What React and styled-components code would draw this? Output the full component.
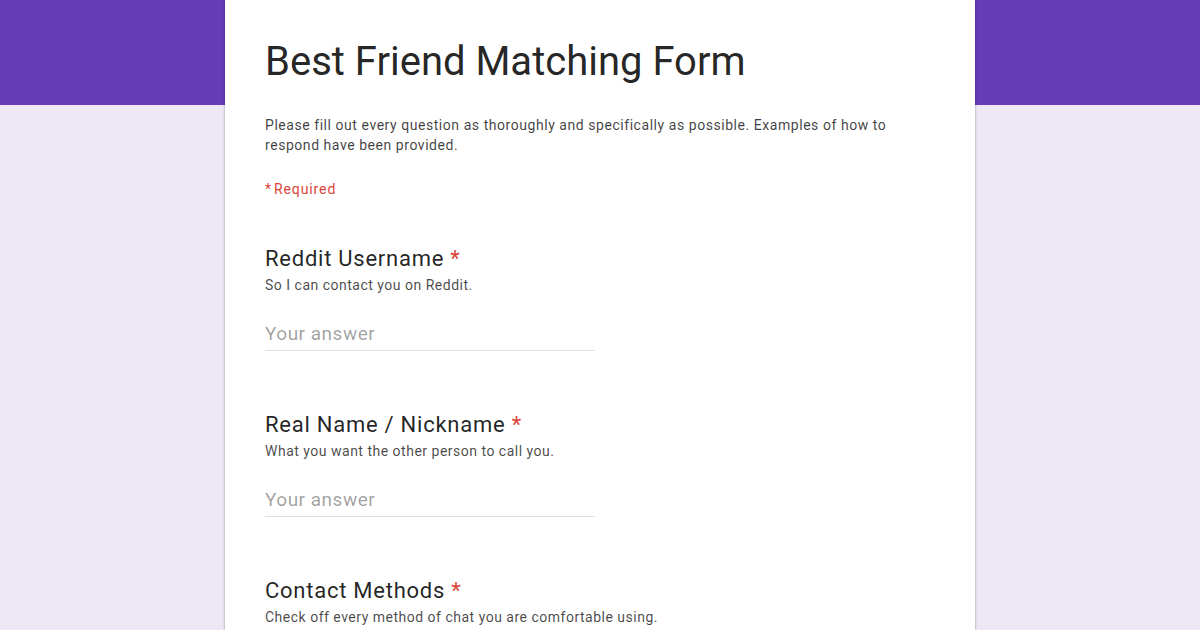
import React from 'react'
import styled, { createGlobalStyle } from 'styled-components'

const Global = createGlobalStyle`
  html, body {
    margin: 0;
    padding: 0;
  }
  body {
    font-family: Roboto, "Noto Sans", Arial, sans-serif;
    background: linear-gradient(#673ab7 0, #673ab7 105px, #ede7f6 105px);
    min-height: 630px;
    overflow: hidden;
  }
`

const questions = [
  { title: 'Reddit Username', help: 'So I can contact you on Reddit.', text: true },
  { title: 'Real Name / Nickname', help: 'What you want the other person to call you.', text: true },
  { title: 'Contact Methods', help: 'Check off every method of chat you are comfortable using.' },
]

function App() {
  return (
    <>
      <Global />
      <Card>
        <Title>Best Friend Matching Form</Title>
        <Description>
          Please fill out every question as thoroughly and specifically as possible. Examples of how to
          respond have been provided.
        </Description>
        <Required><Star>*</Star>Required</Required>
        {questions.map((q) => (
          <Question key={q.title}>
            <QTitle>
              {q.title} <Star>*</Star>
            </QTitle>
            <Help>{q.help}</Help>
            {q.text && <Answer placeholder="Your answer" />}
          </Question>
        ))}
      </Card>
    </>
  )
}

export default App

const Card = styled.div`
  width: 750px;
  min-height: 630px;
  margin: 0 auto;
  box-sizing: border-box;
  padding: 38px 40px 0;
  background: #fff;
  box-shadow: 0 0 2px rgba(0, 0, 0, 0.25), 0 1px 3px rgba(0, 0, 0, 0.15);
`

const Title = styled.h1`
  margin: 0;
  font-size: 40px;
  line-height: 48px;
  font-weight: 400;
  color: rgba(0, 0, 0, 0.87);
`

const Description = styled.p`
  margin: 29px 0 0;
  width: 650px;
  font-size: 14px;
  line-height: 20px;
  letter-spacing: 0.55px;
  color: rgba(0, 0, 0, 0.75);
`

const Required = styled.div`
  margin-top: 24px;
  font-size: 14px;
  line-height: 20px;
  letter-spacing: 0.9px;
  color: #db4437;
`

const Star = styled.span`
  color: #db4437;
  margin-right: 2px;
`

const Question = styled.div`
  margin-top: 46px;
  display: flex;
  flex-direction: column;
  align-items: flex-start;

  & + & {
    margin-top: 60px;
  }
`

const QTitle = styled.div`
  font-size: 22px;
  line-height: 28px;
  letter-spacing: 0.75px;
  color: rgba(0, 0, 0, 0.87);
`

const Help = styled.div`
  margin-top: 3px;
  font-size: 14px;
  line-height: 18px;
  letter-spacing: 0.5px;
  color: rgba(0, 0, 0, 0.72);
`

const Answer = styled.input`
  margin-top: 28px;
  width: 330px;
  padding: 0 0 4px;
  border: none;
  border-bottom: 1px solid #e0e0e0;
  outline: none;
  font-family: inherit;
  font-size: 19px;
  line-height: 24px;
  letter-spacing: 0.5px;
  color: rgba(0, 0, 0, 0.87);
  background: transparent;

  &::placeholder {
    color: rgba(0, 0, 0, 0.38);
  }
`
